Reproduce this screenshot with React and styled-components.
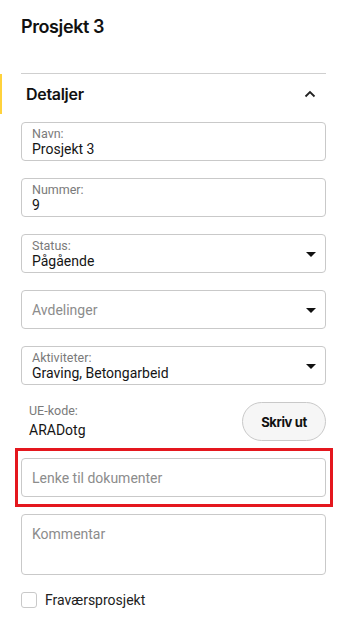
import React from 'react';
import styled, { createGlobalStyle } from 'styled-components';

const GlobalStyle = createGlobalStyle`
  html, body {
    margin: 0;
    padding: 0;
    background: #ffffff;
  }

  body {
    font-family: Roboto, "Noto Sans", sans-serif;
    color: #1a1a1a;
  }
`

const Page = styled.div`
  width: 351px;
  box-sizing: border-box;
  padding: 15px 25px 20px 21px;
`

const Title = styled.h1`
  margin: 0;
  font-family: Inter, sans-serif;
  font-size: 18px;
  line-height: 24px;
  font-weight: 600;
  letter-spacing: -0.4px;
  color: #111;
`

const Section = styled.section`
  margin-top: 34px;
  border-top: 1px solid #cfcfcf;
`

const SectionHeader = styled.div`
  position: relative;
  height: 40px;
  display: flex;
  align-items: center;
  justify-content: space-between;
  padding: 0 10px 0 5px;

  &::before {
    content: '';
    position: absolute;
    left: -21px;
    top: 0;
    bottom: 0;
    width: 2px;
    background: #ffd23c;
  }
`

const SectionTitle = styled.span`
  font-family: Inter, sans-serif;
  font-size: 16px;
  font-weight: 600;
  letter-spacing: -0.3px;
  color: #111;
`

const Fields = styled.div`
  display: flex;
  flex-direction: column;
  gap: 17px;
  margin-top: 8px;
`

const Box = styled.div`
  box-sizing: border-box;
  height: ${p => p.$tall ? '61px' : '39px'};
  border: 1px solid #c9c9c9;
  border-radius: 4px;
  padding: ${p => p.$tall ? '12px 10px' : '2px 10px 0'};
  display: flex;
  align-items: ${p => p.$tall ? 'flex-start' : 'center'};
  justify-content: space-between;
`

const BoxText = styled.div`
  display: flex;
  flex-direction: column;
`

const Label = styled.span`
  font-size: 12.5px;
  line-height: 13px;
  color: #7a7a7a;
`

const Value = styled.span`
  font-size: 14px;
  line-height: 18px;
  color: #151515;
`

const Placeholder = styled.span`
  font-size: 14px;
  line-height: 18px;
  color: #8c8c8c;
  margin-top: -2px;
`

const Caret = styled.span`
  width: 0;
  height: 0;
  margin-right: -1px;
  border-left: 5px solid transparent;
  border-right: 5px solid transparent;
  border-top: 5px solid #111;
`

const CodeRow = styled.div`
  display: flex;
  align-items: center;
  justify-content: space-between;
  padding-left: 8px;
`

const PrintButton = styled.button`
  width: 84px;
  height: 39px;
  border: 1px solid #c9c9c9;
  border-radius: 20px;
  background: #f6f6f6;
  font-family: Inter, sans-serif;
  font-size: 13px;
  font-weight: 700;
  letter-spacing: -0.4px;
  color: #111;
  cursor: pointer;
`

const Highlight = styled.div`
  position: relative;

  &::after {
    content: '';
    position: absolute;
    top: -10px;
    bottom: -10px;
    left: -6px;
    right: -7px;
    border: 3px solid #e4171e;
    pointer-events: none;
  }
`

const CheckRow = styled.label`
  display: flex;
  align-items: center;
  gap: 8px;
  font-size: 14px;
  color: #222;
`

const Check = styled.span`
  width: 16px;
  height: 16px;
  box-sizing: border-box;
  border: 1px solid #c9c9c9;
  border-radius: 3px;
`

const Field = ({ label, value }) => (
  <Box>
    <BoxText>
      <Label>{label}</Label>
      <Value>{value}</Value>
    </BoxText>
  </Box>
)

const Select = ({ label, value, placeholder }) => (
  <Box>
    <BoxText>
      {label && <Label>{label}</Label>}
      {value ? <Value>{value}</Value> : <Placeholder>{placeholder}</Placeholder>}
    </BoxText>
    <Caret />
  </Box>
)

export default function App() {
  return (
    <Page>
      <GlobalStyle />
      <Title>Prosjekt 3</Title>
      <Section>
        <SectionHeader>
          <SectionTitle>Detaljer</SectionTitle>
          <svg width="12" height="8" viewBox="0 0 12 8">
            <polyline points="1.5,6.5 6,2 10.5,6.5" fill="none" stroke="#222" strokeWidth="1.8" />
          </svg>
        </SectionHeader>
        <Fields>
          <Field label="Navn:" value="Prosjekt 3" />
          <Field label="Nummer:" value="9" />
          <Select label="Status:" value="Pågående" />
          <Select placeholder="Avdelinger" />
          <Select label="Aktiviteter:" value="Graving, Betongarbeid" />
          <CodeRow>
            <BoxText>
              <Label>UE-kode:</Label>
              <Value style={{ marginTop: 4 }}>ARADotg</Value>
            </BoxText>
            <PrintButton>Skriv ut</PrintButton>
          </CodeRow>
          <Highlight>
            <Box>
              <Placeholder>Lenke til dokumenter</Placeholder>
            </Box>
          </Highlight>
          <Box $tall>
            <Placeholder>Kommentar</Placeholder>
          </Box>
          <CheckRow>
            <Check />
            Fraværsprosjekt
          </CheckRow>
        </Fields>
      </Section>
    </Page>
  );
}
